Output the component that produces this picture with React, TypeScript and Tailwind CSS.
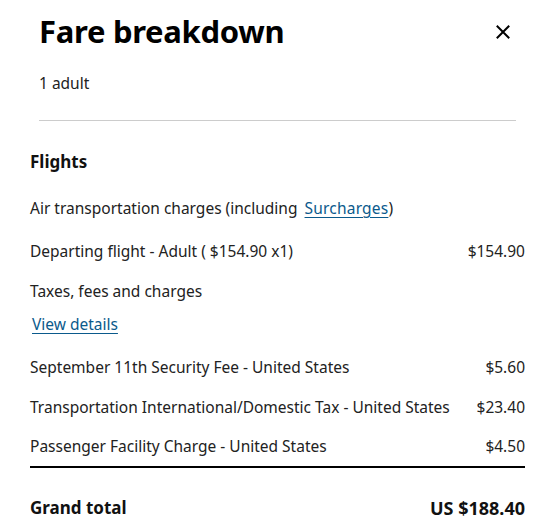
import React from "react";

const Row = ({ label, amount, h = "h-[40px]" }: { label: string; amount: string; h?: string }) => (
  <div className={`flex justify-between items-center ${h} text-[15.5px] text-[#222]`}>
    <span>{label}</span>
    <span>{amount}</span>
  </div>
);

export default function App() {
  return (
    <div className="w-[550px] h-[531px] bg-white overflow-hidden" style={{ fontFamily: '"Noto Sans", "Open Sans", sans-serif' }}>
      <div className="pl-[39px] pr-[34px] pt-[10px]">
        <div className="flex items-center justify-between">
          <h1 className="text-[31px] font-bold text-black leading-[42px] tracking-[-0.3px]">Fare breakdown</h1>
          <button className="mr-[6px] mt-[2px] text-black">
            <svg width="14" height="14" viewBox="0 0 14 14" fill="none" stroke="currentColor" strokeWidth="2" strokeLinecap="square">
              <path d="M1.5 1.5 L12.5 12.5 M12.5 1.5 L1.5 12.5" />
            </svg>
          </button>
        </div>
        <div className="mt-[21px] text-[15.5px] text-[#222] leading-[20px]">1 adult</div>
        <div className="mt-[27px] h-px bg-[#cccccc]" />
      </div>
      <div className="pl-[30px] pr-[25px]">
        <div className="mt-[29px] text-[17px] font-bold text-[#111] leading-[24px]">Flights</div>
        <div className="mt-[24px] text-[15.5px] text-[#222] leading-[20px]">
          Air transportation charges (including{" "}
          <a href="#" className="ml-[3px] text-[#0b5a8c] underline underline-offset-[3px] tracking-[0.2px]">Surcharges</a>)
        </div>
        <div className="mt-[14px]">
          <Row label="Departing flight - Adult ( $154.90 x1)" amount="$154.90" />
        </div>
        <div className="h-[40px] flex items-center text-[15.5px] text-[#222]">Taxes, fees and charges</div>
        <div className="mt-[2px] ml-[2px] text-[15.5px] leading-[20px]">
          <a href="#" className="text-[#0b5a8c] underline underline-offset-[3px]">View details</a>
        </div>
        <div className="mt-[14px]">
          <Row label="September 11th Security Fee - United States" amount="$5.60" />
          <Row label="Transportation International/Domestic Tax - United States" amount="$23.40" />
          <Row label="Passenger Facility Charge - United States" amount="$4.50" h="h-[38px]" />
        </div>
        <div className="h-[2px] bg-black" />
        <div className="mt-[28px] flex justify-between items-center text-[17px] font-bold text-[#111] leading-[24px]">
          <span>Grand total</span>
          <span className="text-[18px]">US $188.40</span>
        </div>
      </div>
    </div>
  );
}
